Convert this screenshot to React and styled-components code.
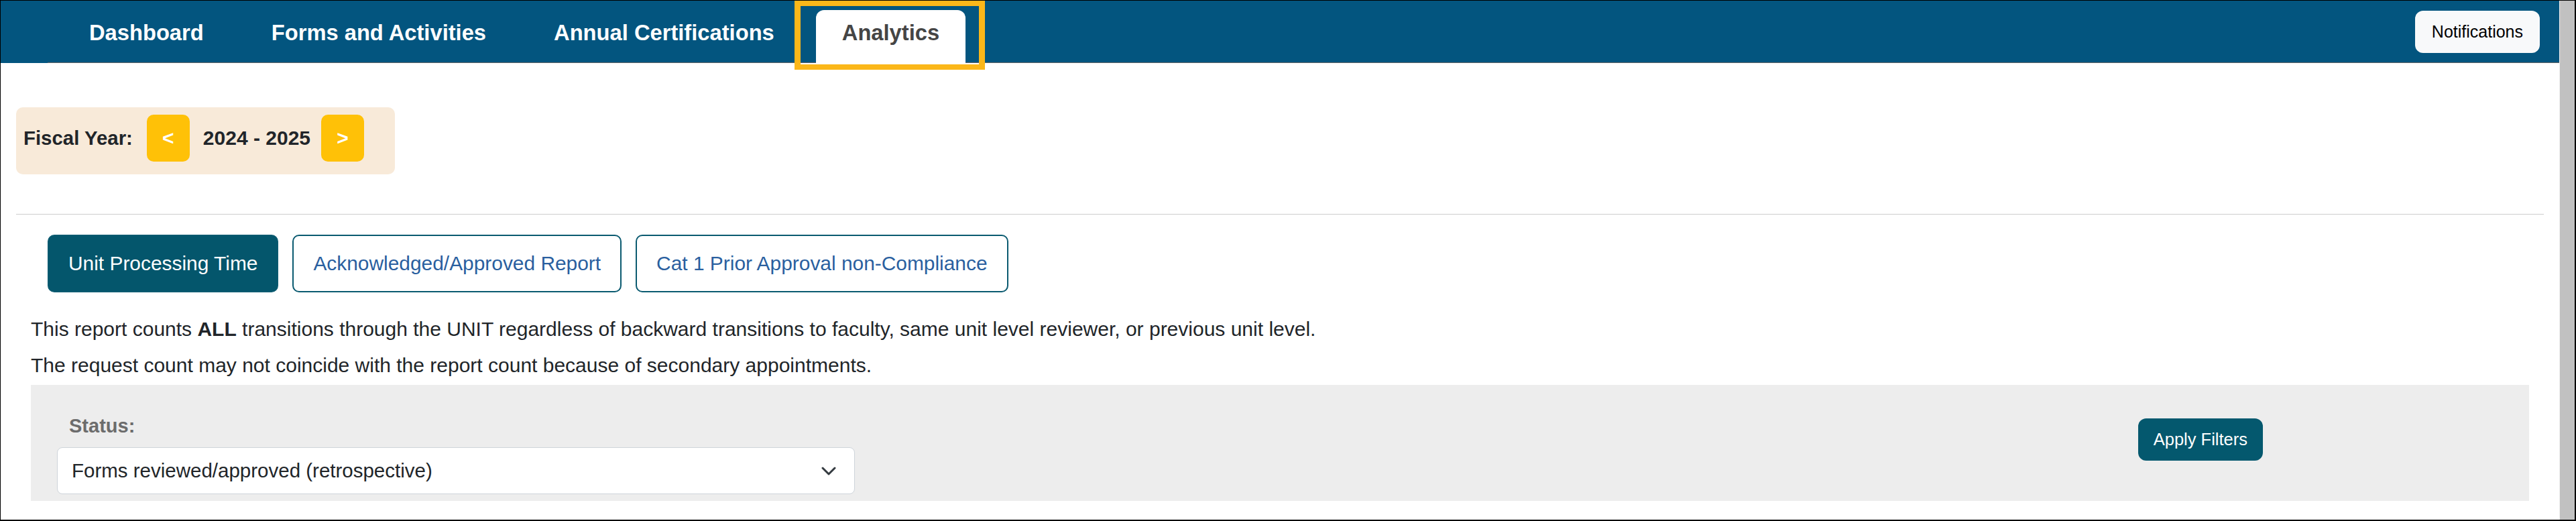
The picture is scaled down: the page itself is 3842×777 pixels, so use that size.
import React from 'react'
import styled, { createGlobalStyle } from 'styled-components'

const GlobalStyle = createGlobalStyle`
  html, body {
    margin: 0;
    padding: 0;
    background: #fff;
  }
  body {
    font-family: "Liberation Sans", Arial, sans-serif;
    color: #212529;
  }
  *, *::before, *::after {
    box-sizing: border-box;
  }
`

const Frame = styled.div`
  display: flex;
  height: 100vh;
  border-style: solid;
  border-color: #000;
  border-width: 1px 2px 2px 1px;
  overflow: hidden;
`

const Main = styled.div`
  flex: 1;
  min-width: 0;
  display: flex;
  flex-direction: column;
`

const ScrollTrack = styled.div`
  flex: none;
  width: 23px;
  background: #c1c1c1;
  border-left: 1px solid #f1f1f1;
`

const Navbar = styled.nav`
  position: relative;
  z-index: 2;
  display: flex;
  height: 93px;
  background: #03557f;
`

const NavTabs = styled.ul`
  flex: 1;
  display: flex;
  align-items: flex-end;
  list-style: none;
  margin: 0 0 0 70px;
  padding: 0 29px 0 0;
  border-bottom: 1px solid #666;
`

const NavTab = styled.li`
  position: relative;
  margin-left: 23px;
  margin-bottom: ${p => (p.$active ? '-1px' : '0')};
  padding: 15px 39px ${p => (p.$active ? '27px' : '26px')};
  line-height: 37px;
  font-size: 32.7px;
  font-weight: 700;
  white-space: nowrap;
  color: ${p => (p.$active ? '#454545' : '#fff')};
  background: ${p => (p.$active ? '#fff' : 'transparent')};
  border-radius: 12px 12px 0 0;
`

const Highlight = styled.span`
  position: absolute;
  top: -14px;
  left: -32px;
  right: -29px;
  bottom: -10px;
  border: 8px solid #fbb719;
  border-left-width: 9px;
  border-right-width: 9px;
  pointer-events: none;
`

const NotifButton = styled.button`
  align-self: center;
  margin-left: auto;
  height: 63px;
  padding: 0 25px;
  border: none;
  border-radius: 12px;
  background: #f8f9fa;
  color: #000;
  font-family: inherit;
  font-size: 25px;
`

const Content = styled.div`
  padding: 0 23px;
`

const FiscalBox = styled.div`
  display: flex;
  align-items: center;
  width: fit-content;
  height: 100px;
  margin-top: 66px;
  padding: 0 46px 8px 11px;
  background: #f8ead9;
  border-radius: 10px;
`

const FiscalLabel = styled.span`
  margin-right: 21px;
  font-size: 29.4px;
  font-weight: 700;
  color: #212529;
`

const YearButton = styled.button`
  width: 64px;
  height: 70px;
  padding: 0;
  border: none;
  border-radius: 10px;
  background: #ffc107;
  color: #fff;
  font-family: inherit;
  font-size: 30px;
  font-weight: 700;
`

const YearText = styled.span`
  margin: 0 16px 0 20px;
  font-size: 30px;
  font-weight: 700;
  color: #212529;
`

const Divider = styled.hr`
  margin: 59px 0 0;
  border: 0;
  border-top: 1px solid #cccccc;
`

const ReportTabs = styled.div`
  display: flex;
  gap: 21px;
  margin: 30px 0 0 47px;
`

const ReportTab = styled.button`
  height: 86px;
  padding: 0 29px;
  border: 2px solid #0a5a70;
  border-radius: 10px;
  background: ${p => (p.$active ? '#04566c' : '#fff')};
  color: ${p => (p.$active ? '#fff' : '#2a5f9f')};
  font-family: inherit;
  font-size: 29.9px;
`

const Report = styled.section`
  margin-top: 32px;
  padding: 0 22px;
`

const Notes = styled.div`
  display: flex;
  flex-direction: column;
  gap: 9px;
  margin-bottom: 7px;
`

const Note = styled.p`
  margin: 0;
  font-size: 30px;
  line-height: 45px;
  color: #212529;
  white-space: nowrap;
`

const FilterPanel = styled.div`
  display: flex;
  align-items: flex-start;
  height: 173px;
  padding: 44px 397px 0 39px;
  background: #ededed;
`

const Field = styled.div`
  display: flex;
  flex-direction: column;
  width: 1190px;
`

const FieldLabel = styled.label`
  margin: 0 0 14px 18px;
  font-size: 29px;
  line-height: 35px;
  font-weight: 700;
  color: #6c6c6c;
`

const SelectBox = styled.div`
  display: flex;
  align-items: center;
  justify-content: space-between;
  height: 70px;
  padding: 0 27px 0 21px;
  background: #fff;
  border: 1.5px solid #ced4da;
  border-radius: 8px;
  font-size: 29.5px;
  color: #212529;
`

const ApplyButton = styled.button`
  margin: 6px 0 0 auto;
  height: 63px;
  padding: 0 23px;
  border: none;
  border-radius: 12px;
  background: #04586e;
  color: #fff;
  font-family: inherit;
  font-size: 25.5px;
`

const Chevron = () => (
  <svg width="22" height="13" viewBox="0 0 22 13" fill="none">
    <path d="M2 2l9 9 9-9" stroke="#343a40" strokeWidth="3" strokeLinecap="round" strokeLinejoin="round" />
  </svg>
)

const navItems = ['Dashboard', 'Forms and Activities', 'Annual Certifications', 'Analytics']
const reports = ['Unit Processing Time', 'Acknowledged/Approved Report', 'Cat 1 Prior Approval non-Compliance']

const App = () => {
  return (
    <>
      <GlobalStyle />
      <Frame>
        <Main>
          <Navbar>
            <NavTabs>
              {navItems.map(item => (
                <NavTab key={item} $active={item === 'Analytics'}>
                  {item}
                  {item === 'Analytics' && <Highlight />}
                </NavTab>
              ))}
              <NotifButton>Notifications</NotifButton>
            </NavTabs>
          </Navbar>

          <Content>
            <FiscalBox>
              <FiscalLabel>Fiscal Year:</FiscalLabel>
              <YearButton>&lt;</YearButton>
              <YearText>2024 - 2025</YearText>
              <YearButton>&gt;</YearButton>
            </FiscalBox>

            <Divider />

            <ReportTabs>
              {reports.map((r, i) => (
                <ReportTab key={r} $active={i === 0}>{r}</ReportTab>
              ))}
            </ReportTabs>

            <Report>
              <Notes>
                <Note>
                  This report counts <b>ALL</b> transitions through the UNIT regardless of backward transitions to faculty, same unit level reviewer, or previous unit level.
                </Note>
                <Note>The request count may not coincide with the report count because of secondary appointments.</Note>
              </Notes>

              <FilterPanel>
                <Field>
                  <FieldLabel>Status:</FieldLabel>
                  <SelectBox>
                    <span>Forms reviewed/approved (retrospective)</span>
                    <Chevron />
                  </SelectBox>
                </Field>
                <ApplyButton>Apply Filters</ApplyButton>
              </FilterPanel>
            </Report>
          </Content>
        </Main>
        <ScrollTrack />
      </Frame>
    </>
  )
}

export default App
